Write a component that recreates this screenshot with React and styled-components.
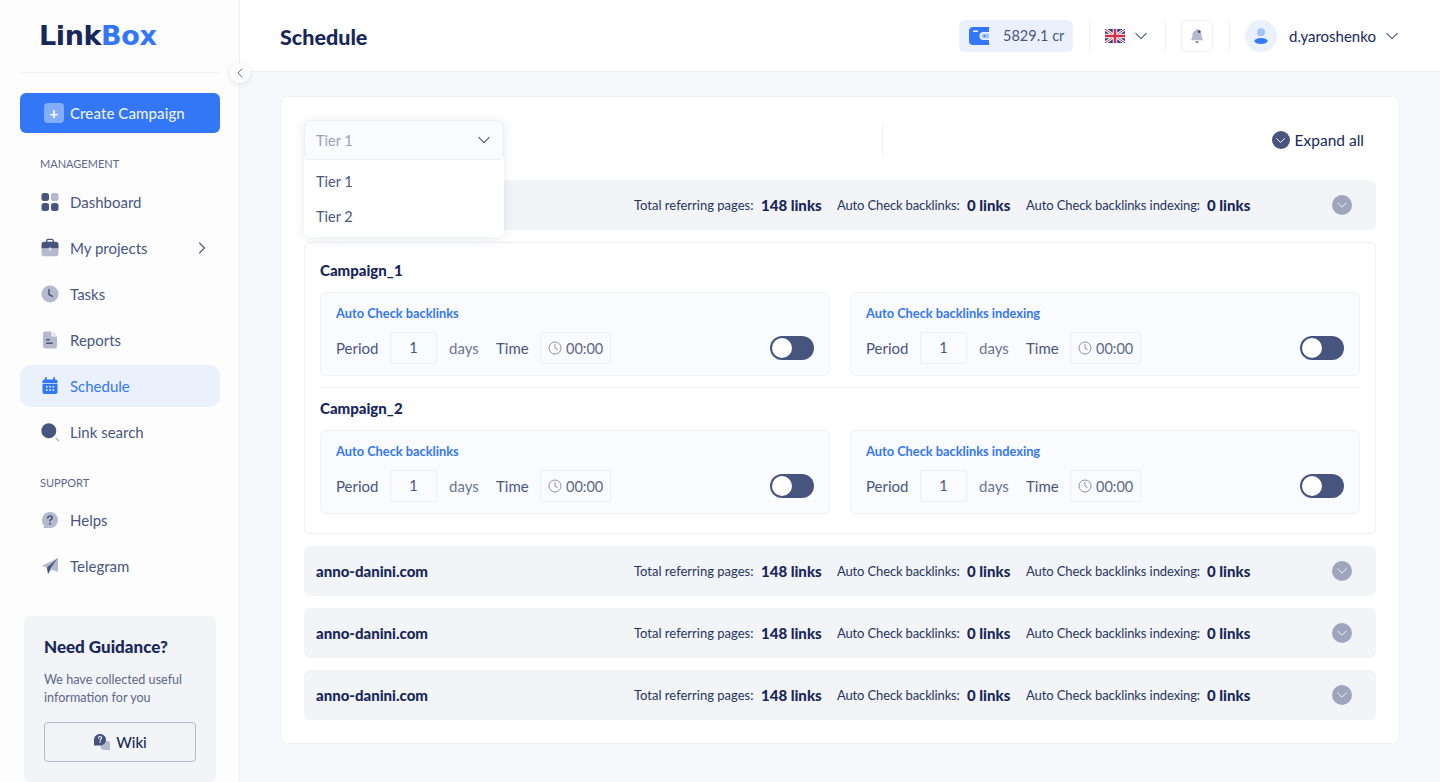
import React from "react";
import styled, { createGlobalStyle } from "styled-components";

const Global = createGlobalStyle`
    * { box-sizing: border-box; }
    html, body { margin: 0; padding: 0; }
    body {
        font-family: "Lato", "Open Sans", sans-serif;
        background: #f7f8fb;
        color: #18275a;
    }
`;

const Chevron = ({ size = 12, color = "#4a5680", dir = "down", width = 1.1 }) => {
    const d = {
        down: "M0.8 3.4 L6 8.6 L11.2 3.4",
        left: "M8.5 1 L3.5 6 L8.5 11",
        right: "M3.5 1 L8.5 6 L3.5 11",
    }[dir];
    return (
        <svg width={size} height={size} viewBox="0 0 12 12" fill="none">
            <path d={d} stroke={color} strokeWidth={width} strokeLinecap="round" strokeLinejoin="round" />
        </svg>
    );
};

const DashboardIcon = () => (
    <svg width="20" height="20" viewBox="0 0 20 20">
        <rect x="1.5" y="1" width="7.5" height="8" rx="2.5" fill="#47547e" />
        <rect x="11" y="1" width="7.5" height="8" rx="2.5" fill="#b4b9cc" />
        <rect x="1.5" y="11" width="7.5" height="8" rx="2.5" fill="#47547e" />
        <rect x="11" y="11" width="7.5" height="8" rx="2.5" fill="#47547e" />
    </svg>
);
const ProjectsIcon = () => (
    <svg width="20" height="20" viewBox="0 0 20 20">
        <path d="M6.8 4V2.600C6.800 1.800 7.300 1.300 8 1.300h4c.7 0 1.200.5 1.200 1.300V4" fill="none" stroke="#47547e" strokeWidth="1.300" />
        <path d="M1.500 10.500V6.500C1.500 4.800 2.500 3.800 4.200 3.800h11.600c1.700 0 2.700 1 2.700 2.700v4z" fill="#47547e" />
        <path d="M1.500 11h17v4.500c0 1.800-1 2.800-2.700 2.800H4.200c-1.700 0-2.700-1-2.700-2.800z" fill="#b4b9cc" />
        <rect x="8.800" y="9.500" width="2.400" height="3" rx=".6" fill="#e3e5ee" />
    </svg>
);
const TasksIcon = () => (
    <svg width="20" height="20" viewBox="0 0 20 20">
        <circle cx="10" cy="10" r="8.500" fill="#b4b9cc" />
        <path d="M9 5.500V10.500L12.500 12.300" fill="none" stroke="#47547e" strokeWidth="1.500" strokeLinecap="round" />
    </svg>
);
const ReportsIcon = () => (
    <svg width="20" height="20" viewBox="0 0 20 20">
        <path d="M5 1.500h6.500v5H17V16c0 1.500-.8 2.400-2.300 2.400H5.300C3.800 18.400 3 17.500 3 16V3.800C3 2.300 3.800 1.500 5 1.500z" fill="#b4b9cc" />
        <path d="M12.800 1.800 17 5.400h-4.200z" fill="#d8dbe6" />
        <rect x="6" y="9" width="4" height="1.500" rx=".7" fill="#47547e" />
        <rect x="6" y="12.500" width="7" height="1.500" rx=".7" fill="#47547e" />
    </svg>
);
const ScheduleIcon = () => (
    <svg width="20" height="20" viewBox="0 0 20 20">
        <rect x="5" y="1" width="1.800" height="4" rx=".9" fill="#3377f6" />
        <rect x="13.200" y="1" width="1.800" height="4" rx=".9" fill="#3377f6" />
        <path d="M2.500 7V5.500c0-1.200.8-2 2-2h11c1.200 0 2 .8 2 2V7z" fill="#3377f6" />
        <path d="M2.500 7.800h15V16c0 1.200-.8 2-2 2h-11c-1.200 0-2-.8-2-2z" fill="#3377f6" />
        <g fill="#fff">
            <rect x="6" y="10" width="1.500" height="1.500" />
            <rect x="9.300" y="10" width="1.500" height="1.500" />
            <rect x="12.600" y="10" width="1.500" height="1.500" />
            <rect x="6" y="13.300" width="1.500" height="1.500" />
            <rect x="9.300" y="13.300" width="1.500" height="1.500" />
            <rect x="12.600" y="13.300" width="1.500" height="1.500" />
        </g>
    </svg>
);
const SearchIcon = () => (
    <svg width="20" height="20" viewBox="0 0 20 20">
        <circle cx="8.800" cy="8.800" r="7.500" fill="#47547e" />
        <path d="M16 16.200 18.500 18.700" stroke="#b4b9cc" strokeWidth="1.600" strokeLinecap="round" />
    </svg>
);
const HelpIcon = () => (
    <svg width="20" height="20" viewBox="0 0 20 20">
        <path d="M10 2a8 8 0 0 1 0 16H3.500L4.300 15.600A8 8 0 0 1 10 2z" fill="#b4b9cc" />
        <path d="M7.800 8c0-1.300 1-2.100 2.200-2.100s2.200.8 2.200 2c0 1.600-2.200 1.500-2.200 3.200" fill="none" stroke="#47547e" strokeWidth="1.500" strokeLinecap="round" />
        <circle cx="10" cy="13.800" r="1" fill="#47547e" />
    </svg>
);
const TelegramIcon = () => (
    <svg width="20" height="20" viewBox="0 0 20 20">
        <path d="M18 2 1.500 10 6.800 11.600z" fill="#b4b9cc" />
        <path d="M18 2 6.800 11.600 8 18z" fill="#47547e" />
        <path d="M18 2V16L10 13z" fill="#b4b9cc" />
    </svg>
);
const WikiIcon = () => (
    <svg width="18" height="18" viewBox="0 0 18 18">
        <path d="M9 8h5.500c1.500 0 2.500 1 2.500 2.500V17h-6c-2 0-3.500-1.500-3.500-3.500z" fill="#b4b9cc" />
        <path d="M7 1c3.300 0 6 2.500 6 5.700S10.300 12.500 7 12.500H1V6.700C1 3.500 3.700 1 7 1z" fill="#47547e" />
        <path d="M5.500 5c0-.9.700-1.500 1.600-1.500s1.500.6 1.500 1.400c0 1.100-1.500 1.100-1.500 2.300" fill="none" stroke="#fff" strokeWidth="1.100" strokeLinecap="round" />
        <circle cx="7.100" cy="9" r=".7" fill="#fff" />
    </svg>
);
const WalletIcon = () => (
    <svg width="20" height="18" viewBox="0 0 20 18">
        <path d="M4 0h16v5h-5.500a4 4 0 0 0 0 8H20v5H4c-2.400 0-4-1.600-4-4V4c0-2.400 1.600-4 4-4z" fill="#3377f6" />
        <rect x="4" y="3.600" width="5" height="1.500" rx=".7" fill="#fff" />
        <path d="M15 6.500h5v5h-5a2.500 2.500 0 0 1 0-5z" fill="#a9c6fb" />
        <circle cx="15.500" cy="9" r="1.100" fill="#3377f6" />
    </svg>
);
const Flag = () => (
    <svg width="20" height="14" viewBox="0 0 20 14">
        <rect width="20" height="14" rx="2" fill="#2b3f86" />
        <path d="M0 0 20 14M20 0 0 14" stroke="#fff" strokeWidth="2.800" />
        <path d="M0 0 20 14M20 0 0 14" stroke="#d0304a" strokeWidth="1" />
        <path d="M10 0V14M0 7H20" stroke="#fff" strokeWidth="4.500" />
        <path d="M10 0V14M0 7H20" stroke="#d0304a" strokeWidth="2.600" />
    </svg>
);
const BellIcon = () => (
    <svg width="14" height="16" viewBox="0 0 14 16">
        <path d="M7 1c.6 0 1 .4 1 1v.4c2.400.5 3.600 2.400 3.600 4.800 0 2.700.6 3.700 1.900 5H.5c1.300-1.300 1.900-2.300 1.900-5C2.400 4.800 3.600 2.900 6 2.400V2c0-.6.400-1 1-1z" fill="#b4b9cc" />
        <path d="M5 13.200h4a2 2 0 0 1-4 0z" fill="#8c93ad" />
        <circle cx="9.200" cy="3.400" r="1.500" fill="#47547e" />
    </svg>
);
const UserIcon = () => (
    <svg width="14" height="16" viewBox="0 0 14 16">
        <circle cx="7" cy="4.200" r="4" fill="#a3c2fa" />
        <ellipse cx="7" cy="13" rx="6.700" ry="2.900" fill="#3377f6" />
    </svg>
);
const ClockIcon = () => (
    <svg width="14" height="14" viewBox="0 0 14 14" fill="none">
        <circle cx="7" cy="7" r="6" stroke="#8a92ae" strokeWidth="1" />
        <path d="M7 3.500V7.200L9.300 8.600" stroke="#8a92ae" strokeWidth="1" strokeLinecap="round" />
    </svg>
);

const Page = styled.div`
    display: flex;
    width: 1440px;
    height: 782px;
    overflow: hidden;
`;
const Sidebar = styled.aside`
    position: relative;
    flex: 0 0 240px;
    display: flex;
    flex-direction: column;
    background: #fdfdfe;
    border-right: 1px solid #f0f1f5;
    padding: 0 19px 0 20px;
`;
const LogoRow = styled.div`
    height: 73px;
    padding: 18px 0 0 19px;
    border-bottom: 1px solid #f0f1f5;
`;
const Logo = styled.div`
    font-family: "DejaVu Sans", sans-serif;
    font-size: 27px;
    font-weight: 700;
    line-height: 36px;
    letter-spacing: -0.4px;
    color: #18275a;
    span { color: #3377f6; }
`;
const CollapseButton = styled.button`
    position: absolute;
    top: 63px;
    right: -11px;
    z-index: 3;
    width: 20px;
    height: 20px;
    padding: 0;
    display: flex;
    align-items: center;
    justify-content: center;
    border: none;
    border-radius: 50%;
    background: #fff;
    box-shadow: 0 1px 6px rgba(30, 45, 90, 0.12);
`;
const CreateButton = styled.button`
    display: flex;
    align-items: center;
    gap: 6px;
    height: 40px;
    margin-top: 20px;
    padding: 0 0 0 24px;
    border: none;
    border-radius: 6px;
    background: #3377f6;
    color: #eaf1fe;
    font: 500 15px "Lato", sans-serif;
    letter-spacing: 0.1px;
`;
const PlusBox = styled.span`
    width: 20px;
    height: 20px;
    display: flex;
    align-items: center;
    justify-content: center;
    border-radius: 4px;
    background: rgba(255, 255, 255, 0.4);
    color: #fff;
    font-size: 15px;
    font-weight: 700;
    line-height: 1;
`;
const SectionLabel = styled.div`
    margin: ${(p) => p.$top}px 0 ${(p) => p.$bottom}px 20px;
    height: 14px;
    font-size: 11px;
    line-height: 15px;
    color: #5c6789;
`;
const Nav = styled.nav`
    display: flex;
    flex-direction: column;
    gap: 4px;
`;
const NavItem = styled.a`
    display: flex;
    align-items: center;
    gap: 10px;
    height: 42px;
    padding: 0 12px 0 20px;
    border-radius: 10px;
    font-size: 15px;
    color: ${(p) => (p.$active ? "#3377f6" : "#4a5680")};
    background: ${(p) => (p.$active ? "#eaf1fd" : "transparent")};
`;
const NavArrow = styled.span`
    margin-left: auto;
    display: flex;
`;
const Guidance = styled.div`
    margin: auto 4px 0;
    height: 166px;
    padding: 20px;
    border-radius: 6px;
    background: #f3f4f7;
`;
const GuidanceTitle = styled.div`
    font-size: 17px;
    font-weight: 900;
    line-height: 22px;
    color: #18275a;
`;
const GuidanceText = styled.p`
    margin: 13px 0 0;
    font-size: 12.600px;
    line-height: 18px;
    color: #5c6789;
`;
const WikiButton = styled.button`
    display: flex;
    align-items: center;
    justify-content: center;
    gap: 5px;
    width: 152px;
    height: 40px;
    margin-top: 15px;
    padding: 0;
    border: 1px solid #b4b9cc;
    border-radius: 4px;
    background: transparent;
    color: #18275a;
    font: 500 15px "Lato", sans-serif;
`;

const Main = styled.main`
    flex: 1;
    min-width: 0;
    display: flex;
    flex-direction: column;
`;
const Header = styled.header`
    display: flex;
    align-items: center;
    height: 72px;
    padding: 0 42px 0 40px;
    background: #fff;
    border-bottom: 1px solid #f0f1f5;
`;
const PageTitle = styled.h1`
    margin: 2px auto 0 0;
    font-size: 21.500px;
    font-weight: 900;
    color: #18275a;
`;
const Wallet = styled.div`
    display: flex;
    align-items: center;
    gap: 14px;
    height: 32px;
    width: 114px;
    padding-left: 10px;
    border-radius: 6px;
    background: #eaf1fd;
    font-size: 14.500px;
    color: #4a5680;
`;
const HeaderDivider = styled.span`
    width: 1px;
    height: 32px;
    margin: 0 15px 0 16px;
    background: #f0f1f5;
`;
const LangPick = styled.div`
    display: flex;
    align-items: center;
    gap: 10px;
    padding-right: 2px;
`;
const BellBox = styled.div`
    width: 32px;
    height: 32px;
    display: flex;
    align-items: center;
    justify-content: center;
    border: 1px solid #eceef3;
    border-radius: 6px;
`;
const Avatar = styled.div`
    width: 32px;
    height: 32px;
    display: flex;
    align-items: center;
    justify-content: center;
    border-radius: 50%;
    background: #eaf1fd;
`;
const UserName = styled.span`
    width: 86px;
    margin: 0 11px 0 12px;
    font-size: 15px;
    white-space: nowrap;
    color: #18275a;
`;

const Content = styled.div`
    flex: 1;
    padding: 24px 40px 0;
`;
const Card = styled.section`
    position: relative;
    padding: 23px 23px 23px;
    border: 1px solid #f0f1f5;
    border-radius: 6px;
    background: #fff;
`;
const Toolbar = styled.div`
    display: flex;
    align-items: center;
    justify-content: flex-end;
    height: 40px;
    margin-bottom: 20px;
`;
const ToolbarDivider = styled.span`
    width: 1px;
    height: 32px;
    margin-right: 389px;
    background: #f0f1f5;
`;
const ExpandAll = styled.div`
    display: flex;
    align-items: center;
    gap: 5px;
    margin-right: 12px;
    font-size: 15.500px;
    color: #18275a;
`;
const RoundChevron = styled.span`
    width: ${(p) => p.$size}px;
    height: ${(p) => p.$size}px;
    display: flex;
    align-items: center;
    justify-content: center;
    border-radius: 50%;
    background: ${(p) => p.$bg};
`;
const Dropdown = styled.div`
    position: absolute;
    top: 23px;
    left: 23px;
    z-index: 2;
    width: 200px;
    border-radius: 6px;
    background: #fff;
    box-shadow: 0 2px 12px rgba(30, 45, 90, 0.1);
`;
const DropdownHead = styled.div`
    display: flex;
    align-items: center;
    justify-content: space-between;
    height: 40px;
    padding: 0 13px 0 11px;
    border: 1px solid #eceef3;
    border-radius: 6px;
    background: #fafbfe;
    font-size: 14.500px;
    color: #9aa1ba;
`;
const DropdownList = styled.div`
    display: flex;
    flex-direction: column;
    padding: 4px 0 3px;
`;
const DropdownItem = styled.div`
    height: 35px;
    padding-left: 12px;
    font-size: 14.500px;
    line-height: 35px;
    color: #4a5680;
`;
const Rows = styled.div`
    display: flex;
    flex-direction: column;
    gap: 12px;
`;
const Row = styled.div`
    display: flex;
    align-items: center;
    height: 50px;
    padding: 0 24px 0 12px;
    border-radius: 6px;
    background: #f3f4f7;
`;
const RowTitle = styled.div`
    flex: 0 0 318px;
    font-size: 15px;
    font-weight: 900;
    color: #18275a;
`;
const Stat = styled.div`
    flex: 0 0 ${(p) => p.$width}px;
    display: flex;
    align-items: center;
`;
const StatLabel = styled.span`
    flex: 0 0 ${(p) => p.$width}px;
    font-size: 13px;
    letter-spacing: ${(p) => p.$spacing || 0}px;
    white-space: nowrap;
    color: #26345f;
`;
const StatValue = styled.span`
    font-size: 15px;
    font-weight: 900;
    color: #18275a;
`;
const RowEnd = styled.span`
    margin-left: auto;
    display: flex;
`;
const Details = styled.div`
    padding: 16px 15px 19px;
    border: 1px solid #f0f1f5;
    border-radius: 6px;
`;
const Campaign = styled.div`
    & + & {
        margin-top: 11px;
        padding-top: 9px;
        border-top: 1px solid #f0f1f5;
    }
`;
const CampaignTitle = styled.div`
    height: 22px;
    margin-bottom: 11px;
    font-size: 15px;
    font-weight: 900;
    line-height: 23px;
    color: #18275a;
`;
const Panels = styled.div`
    display: grid;
    grid-template-columns: 510px 510px;
    gap: 20px;
`;
const Panel = styled.div`
    height: 84px;
    padding: 12px 15px 0;
    border: 1px solid #f0f1f5;
    border-radius: 6px;
    background: #fafbfe;
`;
const PanelTitle = styled.div`
    height: 16px;
    margin-bottom: 11px;
    font-size: 12.800px;
    font-weight: 700;
    line-height: 16px;
    color: #3377f6;
`;
const PanelRow = styled.div`
    display: flex;
    align-items: center;
`;
const FieldLabel = styled.span`
    flex: 0 0 ${(p) => p.$width}px;
    font-size: 15px;
    color: ${(p) => (p.$muted ? "#6a7494" : "#4a5680")};
`;
const PeriodBox = styled.div`
    width: 47px;
    height: 32px;
    margin-right: 12px;
    border: 1px solid #eceef3;
    border-radius: 2px;
    font-size: 14.500px;
    line-height: 30px;
    text-align: center;
    color: #4a5680;
`;
const TimeBox = styled.div`
    display: flex;
    align-items: center;
    gap: 4px;
    width: 71px;
    height: 32px;
    padding-left: 7px;
    border: 1px solid #eceef3;
    border-radius: 2px;
    font-size: 14.500px;
    color: #5c6789;
`;
const Toggle = styled.span`
    margin-left: auto;
    width: 44px;
    height: 24px;
    padding: 2px;
    border-radius: 12px;
    background: #47547e;
    display: flex;
`;
const Knob = styled.span`
    width: 20px;
    height: 20px;
    border-radius: 50%;
    background: #fff;
`;

const navTop = [
    { label: "Dashboard", icon: <DashboardIcon /> },
    { label: "My projects", icon: <ProjectsIcon />, arrow: true },
    { label: "Tasks", icon: <TasksIcon /> },
    { label: "Reports", icon: <ReportsIcon /> },
    { label: "Schedule", icon: <ScheduleIcon />, active: true },
    { label: "Link search", icon: <SearchIcon /> },
];
const navSupport = [
    { label: "Helps", icon: <HelpIcon /> },
    { label: "Telegram", icon: <TelegramIcon /> },
];

function NavList({ items }) {
    return (
        <Nav>
            {items.map((item) => (
                <NavItem key={item.label} $active={item.active}>
                    {item.icon}
                    {item.label}
                    {item.arrow && (
                        <NavArrow>
                            <Chevron dir="right" />
                        </NavArrow>
                    )}
                </NavItem>
            ))}
        </Nav>
    );
}

function SummaryRow({ title }) {
    return (
        <Row>
            <RowTitle>{title}</RowTitle>
            <Stat $width={203}>
                <StatLabel $width={127}>Total referring pages:</StatLabel>
                <StatValue>148 links</StatValue>
            </Stat>
            <Stat $width={189}>
                <StatLabel $width={130} $spacing={-0.14}>
                    Auto Check backlinks:
                </StatLabel>
                <StatValue>0 links</StatValue>
            </Stat>
            <Stat $width={260}>
                <StatLabel $width={181} $spacing={-0.1}>
                    Auto Check backlinks indexing:
                </StatLabel>
                <StatValue>0 links</StatValue>
            </Stat>
            <RowEnd>
                <RoundChevron $size={20} $bg="#9fa5bd">
                    <Chevron size={10} color="#eef0f5" width={1.2} />
                </RoundChevron>
            </RowEnd>
        </Row>
    );
}

function SchedulePanel({ title }) {
    return (
        <Panel>
            <PanelTitle>{title}</PanelTitle>
            <PanelRow>
                <FieldLabel $width={54}>Period</FieldLabel>
                <PeriodBox>1</PeriodBox>
                <FieldLabel $width={47} $muted>
                    days
                </FieldLabel>
                <FieldLabel $width={44}>Time</FieldLabel>
                <TimeBox>
                    <ClockIcon />
                    00:00
                </TimeBox>
                <Toggle>
                    <Knob />
                </Toggle>
            </PanelRow>
        </Panel>
    );
}

function CampaignBlock({ name }) {
    return (
        <Campaign>
            <CampaignTitle>{name}</CampaignTitle>
            <Panels>
                <SchedulePanel title="Auto Check backlinks" />
                <SchedulePanel title="Auto Check backlinks indexing" />
            </Panels>
        </Campaign>
    );
}

export default function App() {
    return (
        <>
            <Global />
            <Page>
                <Sidebar>
                    <LogoRow>
                        <Logo>
                            Link<span>Box</span>
                        </Logo>
                    </LogoRow>
                    <CollapseButton>
                        <Chevron dir="left" size={10} />
                    </CollapseButton>
                    <CreateButton>
                        <PlusBox>+</PlusBox>
                        Create Campaign
                    </CreateButton>
                    <SectionLabel $top={23} $bottom={11}>
                        MANAGEMENT
                    </SectionLabel>
                    <NavList items={navTop} />
                    <SectionLabel $top={22} $bottom={10}>
                        SUPPORT
                    </SectionLabel>
                    <NavList items={navSupport} />
                    <Guidance>
                        <GuidanceTitle>Need Guidance?</GuidanceTitle>
                        <GuidanceText>
                            We have collected useful
                            <br />
                            information for you
                        </GuidanceText>
                        <WikiButton>
                            <WikiIcon />
                            Wiki
                        </WikiButton>
                    </Guidance>
                </Sidebar>
                <Main>
                    <Header>
                        <PageTitle>Schedule</PageTitle>
                        <Wallet>
                            <WalletIcon />
                            5829.1 cr
                        </Wallet>
                        <HeaderDivider />
                        <LangPick>
                            <Flag />
                            <Chevron />
                        </LangPick>
                        <HeaderDivider />
                        <BellBox>
                            <BellIcon />
                        </BellBox>
                        <HeaderDivider />
                        <Avatar>
                            <UserIcon />
                        </Avatar>
                        <UserName>d.yaroshenko</UserName>
                        <Chevron />
                    </Header>
                    <Content>
                        <Card>
                            <Dropdown>
                                <DropdownHead>
                                    Tier 1
                                    <Chevron />
                                </DropdownHead>
                                <DropdownList>
                                    <DropdownItem>Tier 1</DropdownItem>
                                    <DropdownItem>Tier 2</DropdownItem>
                                </DropdownList>
                            </Dropdown>
                            <Toolbar>
                                <ToolbarDivider />
                                <ExpandAll>
                                    <RoundChevron $size={18} $bg="#47547e">
                                        <Chevron size={9} color="#fff" width={1.3} />
                                    </RoundChevron>
                                    Expand all
                                </ExpandAll>
                            </Toolbar>
                            <Rows>
                                <SummaryRow />
                                <Details>
                                    <CampaignBlock name="Campaign_1" />
                                    <CampaignBlock name="Campaign_2" />
                                </Details>
                                <SummaryRow title="anno-danini.com" />
                                <SummaryRow title="anno-danini.com" />
                                <SummaryRow title="anno-danini.com" />
                            </Rows>
                        </Card>
                    </Content>
                </Main>
            </Page>
        </>
    );
}
